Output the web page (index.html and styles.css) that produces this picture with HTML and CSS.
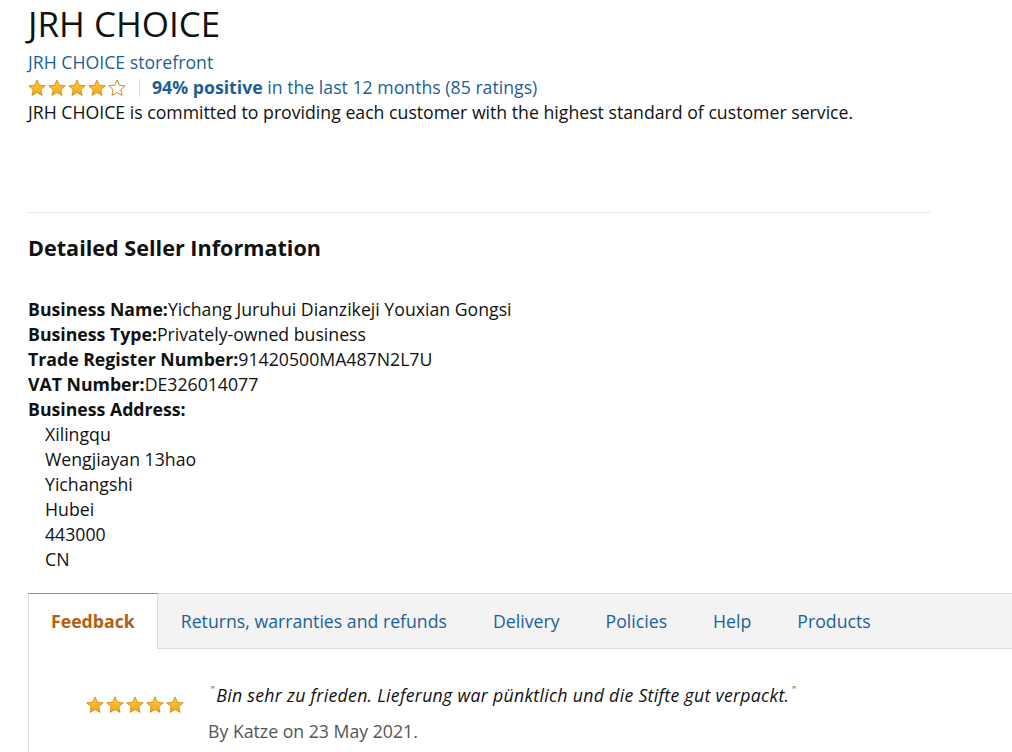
FILE: index.html
```html
<!DOCTYPE html>
<html>
<head>
<meta charset="utf-8">
<link rel="stylesheet" href="styles.css">
</head>
<body>
<div class="page">
  <h1 class="title">JRH CHOICE</h1>
  <a class="link storefront" href="#">JRH CHOICE storefront</a>
  <div class="rating-row">
    <span class="stars">
      <svg width="100" height="18" viewBox="0 0 100 18">
        <defs>
          <linearGradient id="g" x1="0" y1="0" x2="0" y2="1">
            <stop offset="0" stop-color="#ffcf3c"/>
            <stop offset="1" stop-color="#f2a21a"/>
          </linearGradient>
          <path id="st" d="M9 0.9L11.35 6.26L17.18 6.84L12.8 10.74L14.05 16.46L9 13.5L3.95 16.46L5.2 10.74L0.82 6.84L6.65 6.26Z"/>
        </defs>
        <g stroke-linejoin="round">
        <use href="#st" x="0" fill="url(#g)" stroke="#d38a17" stroke-width="0.9"/>
        <use href="#st" x="20" fill="url(#g)" stroke="#d38a17" stroke-width="0.9"/>
        <use href="#st" x="40" fill="url(#g)" stroke="#d38a17" stroke-width="0.9"/>
        <use href="#st" x="60" fill="url(#g)" stroke="#d38a17" stroke-width="0.9"/>
        <use href="#st" x="80" fill="#fff" stroke="#d38a17" stroke-width="1"/>
        <clipPath id="half"><rect x="80" y="0" width="9" height="18"/></clipPath>
        <use href="#st" x="80" fill="url(#g)" clip-path="url(#half)"/>
        </g>
      </svg>
    </span>
    <span class="sep"></span>
    <a class="link" href="#"><b>94% positive</b> in the last 12 months (85 ratings)</a>
  </div>
  <p class="desc">JRH CHOICE is committed to providing each customer with the highest standard of customer service.</p>

  <hr class="rule">

  <h2 class="section-title">Detailed Seller Information</h2>

  <div class="info">
    <div><b>Business Name:</b>Yichang Juruhui Dianzikeji Youxian Gongsi</div>
    <div><b>Business Type:</b>Privately-owned business</div>
    <div><b>Trade Register Number:</b>91420500MA487N2L7U</div>
    <div><b>VAT Number:</b>DE326014077</div>
    <div><b>Business Address:</b></div>
    <div class="addr">
      <div>Xilingqu</div>
      <div>Wengjiayan 13hao</div>
      <div>Yichangshi</div>
      <div>Hubei</div>
      <div>443000</div>
      <div>CN</div>
    </div>
  </div>

  <div class="tabs">
    <div class="tab active">Feedback</div>
    <div class="tab">Returns, warranties and refunds</div>
    <div class="tab">Delivery</div>
    <div class="tab">Policies</div>
    <div class="tab">Help</div>
    <div class="tab">Products</div>
  </div>
  <div class="tab-body">
    <div class="review">
      <span class="stars5">
        <svg width="100" height="18" viewBox="0 0 100 18">
          <g stroke-linejoin="round">
          <use href="#st" x="0" fill="url(#g)" stroke="#d38a17" stroke-width="0.9"/>
          <use href="#st" x="20" fill="url(#g)" stroke="#d38a17" stroke-width="0.9"/>
          <use href="#st" x="40" fill="url(#g)" stroke="#d38a17" stroke-width="0.9"/>
          <use href="#st" x="60" fill="url(#g)" stroke="#d38a17" stroke-width="0.9"/>
          <use href="#st" x="80" fill="url(#g)" stroke="#d38a17" stroke-width="0.9"/>
          </g>
        </svg>
      </span>
      <div class="review-text">
        <div class="quote"><span class="q">"</span>Bin sehr zu frieden. Lieferung war pünktlich und die Stifte gut verpackt.<span class="q">"</span></div>
        <div class="by">By Katze on 23 May 2021.</div>
      </div>
    </div>
  </div>
</div>
</body>
</html>
```

FILE: styles.css
```css
* { box-sizing: border-box; }
html, body { margin: 0; padding: 0; background: #fff; }
body {
  font-family: "Open Sans", "Noto Sans", sans-serif;
  font-size: 17.7px;
  line-height: 25px;
  color: #111;
  overflow: hidden;
}
.page {
  padding: 0 0 0 28px;
}
.title {
  margin: 0;
  padding-top: 4px;
  font-size: 35px;
  line-height: 40px;
  font-weight: 400;
  color: #111;
  height: 50px;
}
.link {
  color: #1d5f94;
  text-decoration: none;
}
.link b { font-weight: 700; }
.storefront { display: block; }
.rating-row {
  display: flex;
  align-items: center;
  height: 25px;
}
.stars { display: flex; height: 18px; }
.sep {
  width: 1px;
  height: 18px;
  background: #ddd;
  margin: 0 12px 0 11px;
}
.desc { margin: 0; }
.rule {
  border: 0;
  border-top: 1px solid #e7e7e7;
  margin: 87px 0 0 0;
  width: 902px;
}
.section-title {
  margin: 19px 0 0 0;
  font-size: 21.6px;
  line-height: 32px;
  font-weight: 700;
}
.info {
  margin-top: 33px;
}
.info b { font-weight: 700; }
.addr { padding-left: 17px; }
.tabs {
  margin-top: 21px;
  display: flex;
  background: #f3f3f3;
  border-top: 1px solid #ddd;
  border-bottom: 1px solid #ddd;
  height: 56px;
}
.tab {
  padding: 0 23px;
  display: flex;
  align-items: center;
  color: #1d5f94;
  height: 55px;
}
.tab.active {
  background: #fff;
  color: #b55d10;
  font-weight: 700;
  border-top: 1px solid #e47911;
  border-left: 1px solid #ddd;
  border-right: 1px solid #ddd;
  margin-top: -1px;
  height: 56px;
  margin-bottom: -1px;
  padding: 0 22px;
}
.tab-body {
  border-left: 1px solid #ddd;
  padding: 34px 0 40px 57px;
}
.review {
  display: flex;
  align-items: flex-start;
}
.stars5 { margin-top: 13px; display: flex; }
.review-text { margin-left: 22px; }
.quote { font-style: italic; letter-spacing: 0.3px; }
.q { font-size: 11px; vertical-align: top; line-height: 14px; color: #555; padding: 0 2px; letter-spacing: 0; }
.by { color: #555; margin-top: 11px; }
```
